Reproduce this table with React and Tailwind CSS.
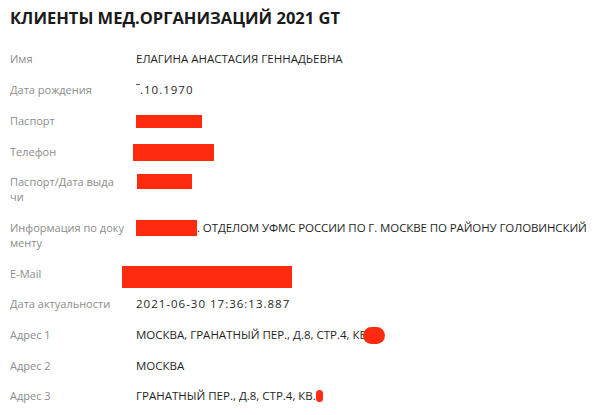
import React from "react";

const RED = "bg-[#ff2b0e]";

function Row({ label, children, tracking = "" }) {
  return (
    <div className="grid grid-cols-[126px_1fr] py-[7.85px] leading-[15px]">
      <div className="text-[11px] text-[#8c8c8c]">{label}</div>
      <div className={`h-[15px] text-[11.5px] text-[#1f1f1f] whitespace-nowrap ${tracking}`}>{children}</div>
    </div>
  );
}

export default function App() {
  return (
    <div
      className="w-[600px] h-[415px] bg-white overflow-hidden pl-[10px]"
      style={{ fontFamily: '"Open Sans", "Noto Sans", sans-serif' }}
    >
      <div className="pt-[6px] h-[43.65px] text-[16.5px] font-bold leading-[24px] text-[#1a1a1a]">
        КЛИЕНТЫ МЕД.ОРГАНИЗАЦИЙ 2021 GT
      </div>
      <Row label="Имя">ЕЛАГИНА АНАСТАСИЯ ГЕННАДЬЕВНА</Row>
      <Row label="Дата рождения" tracking="tracking-[1px]">
        <span className="inline-block w-[4px] h-[1px] bg-[#555] align-[9px]"></span>
        .10.1970
      </Row>
      <Row label="Паспорт">
        <span className={`inline-block w-[66px] h-[13px] ${RED} align-middle`}></span>
      </Row>
      <Row label="Телефон">
        <span className={`inline-block w-[81px] h-[17px] ml-[-3px] ${RED} align-[-4px]`}></span>
      </Row>
      <Row
        label={
          <>
            <span className="block">Паспорт/Дата выда</span>
            <span className="block">чи</span>
          </>
        }
      >
        <span className={`inline-block w-[55px] h-[15px] ml-[1px] ${RED} align-[-3px]`}></span>
      </Row>
      <Row
        label={
          <>
            <span className="block">Информация по доку</span>
            <span className="block">менту</span>
          </>
        }
        tracking="tracking-[-0.1px]"
      >
        <span className={`inline-block w-[61px] h-[16px] ${RED} align-[-4px]`}></span>
        . ОТДЕЛОМ УФМС РОССИИ ПО Г. МОСКВЕ ПО РАЙОНУ ГОЛОВИНСКИЙ
      </Row>
      <Row label="E-Mail">
        <span className={`inline-block w-[170px] h-[22px] ml-[-14px] ${RED} align-[-6px]`}></span>
      </Row>
      <Row label="Дата актуальности" tracking="tracking-[1px]">2021-06-30 17:36:13.887</Row>
      <Row label="Адрес 1">
        МОСКВА, ГРАНАТНЫЙ ПЕР., Д.8, СТР.4, КВ
        <span className={`inline-block w-[22px] h-[17px] ml-[-4px] rounded-full ${RED} align-[-5px]`}></span>
      </Row>
      <Row label="Адрес 2">МОСКВА</Row>
      <Row label="Адрес 3">
        ГРАНАТНЫЙ ПЕР., Д.8, СТР.4, КВ.
        <span className={`inline-block w-[7px] h-[12px] rounded-full ${RED} align-[-2px]`}></span>
      </Row>
    </div>
  );
}
